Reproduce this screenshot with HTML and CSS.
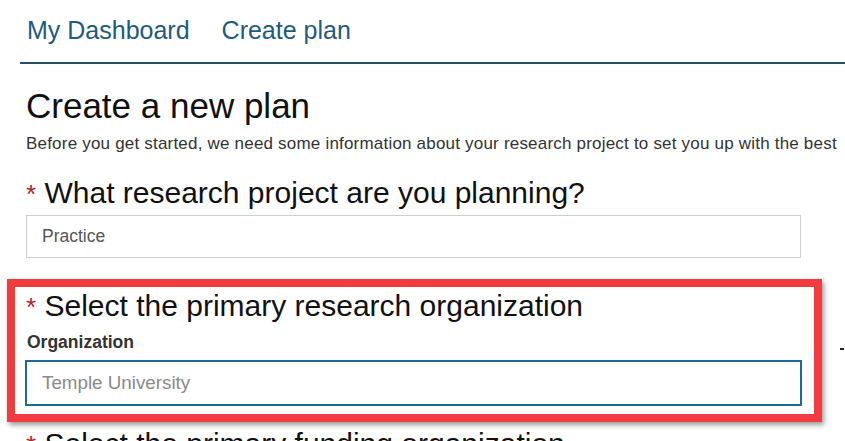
FILE: index.html
```html
<!DOCTYPE html>
<html lang="en">
<head>
<meta charset="utf-8">
<title>Create a new plan</title>
<link rel="stylesheet" href="styles.css">
</head>
<body>
<nav class="nav">
  <a class="nav-link" href="#">My Dashboard</a>
  <a class="nav-link" href="#">Create plan</a>
</nav>
<main class="main">
  <h1 class="title">Create a new plan</h1>
  <p class="intro">Before you get started, we need some information about your research project to set you up with the best</p>
  <h2 class="question"><span class="req">*</span> What research project are you planning?</h2>
  <input class="field field-plain" type="text" value="Practice">
  <div class="highlight-row">
    <section class="highlight">
      <h2 class="question"><span class="req">*</span> Select the primary research organization</h2>
      <label class="field-label">Organization</label>
      <input class="field field-focus" type="text" placeholder="Temple University">
    </section>
    <span class="side-mark"></span>
  </div>
  <h2 class="question question-next"><span class="req">*</span> Select the primary funding organization</h2>
</main>
</body>
</html>
```

FILE: styles.css
```css
* { box-sizing: border-box; }
html, body { margin: 0; padding: 0; height: 441px; overflow: hidden; background: #fff; }
body { font-family: "Liberation Sans", Arial, sans-serif; color: #111; }

.nav {
  margin-left: 20px;
  padding: 15px 0 0 7px;
  height: 64px;
  display: flex;
  gap: 32px;
  border-bottom: 2px solid #234f6b;
}
.nav-link {
  font-size: 25px;
  line-height: 30px;
  color: #1f5b7e;
  text-decoration: none;
}

.main { padding-left: 25px; }

.title {
  margin: 22px 0 0 1px;
  font-size: 35px;
  line-height: 40px;
  font-weight: normal;
  color: #111;
}
.intro {
  margin: 8px 0 0 1px;
  font-size: 17px;
  line-height: 20px;
  letter-spacing: 0.2px;
  color: #333;
  white-space: nowrap;
}
.question {
  margin: 22px 0 0 1px;
  font-size: 30px;
  line-height: 34px;
  font-weight: normal;
  color: #111;
  white-space: nowrap;
}
.req { color: #b5232a; font-size: 26px; }

.field {
  display: block;
  font-family: "Liberation Sans", Arial, sans-serif;
  font-size: 17.5px;
  outline: none;
  background: #fff;
}
.field-plain {
  margin: 4px 0 0 1px;
  width: 775px;
  height: 43px;
  border: 1px solid #cfcfcf;
  padding: 0 15px;
  color: #555;
}
.field-focus {
  width: 777px;
  height: 46px;
  border: 2px solid #1d6b92;
  padding: 0 15px;
  margin-top: 8px;
  font-size: 18.8px;
}
.field-focus::placeholder { color: #8a8a8a; }

.highlight-row {
  display: flex;
  align-items: center;
  margin: 21px 0 0 -18px;
}
.highlight {
  width: 815px;
  border: 8px solid #f03c3f;
  padding: 2px 12px 8px 10px;
  box-shadow: 2px 3px 5px rgba(0, 0, 0, 0.4);
}
.highlight .question { margin-top: 0; }
.field-label {
  display: block;
  margin: 8px 0 0 2px;
  font-size: 17.5px;
  line-height: 20px;
  font-weight: bold;
  color: #333;
}
.side-mark {
  width: 4px;
  height: 2px;
  background: #222;
  margin-left: 18px;
  margin-top: -4px;
}
.question-next { margin-top: 5px; }
```
